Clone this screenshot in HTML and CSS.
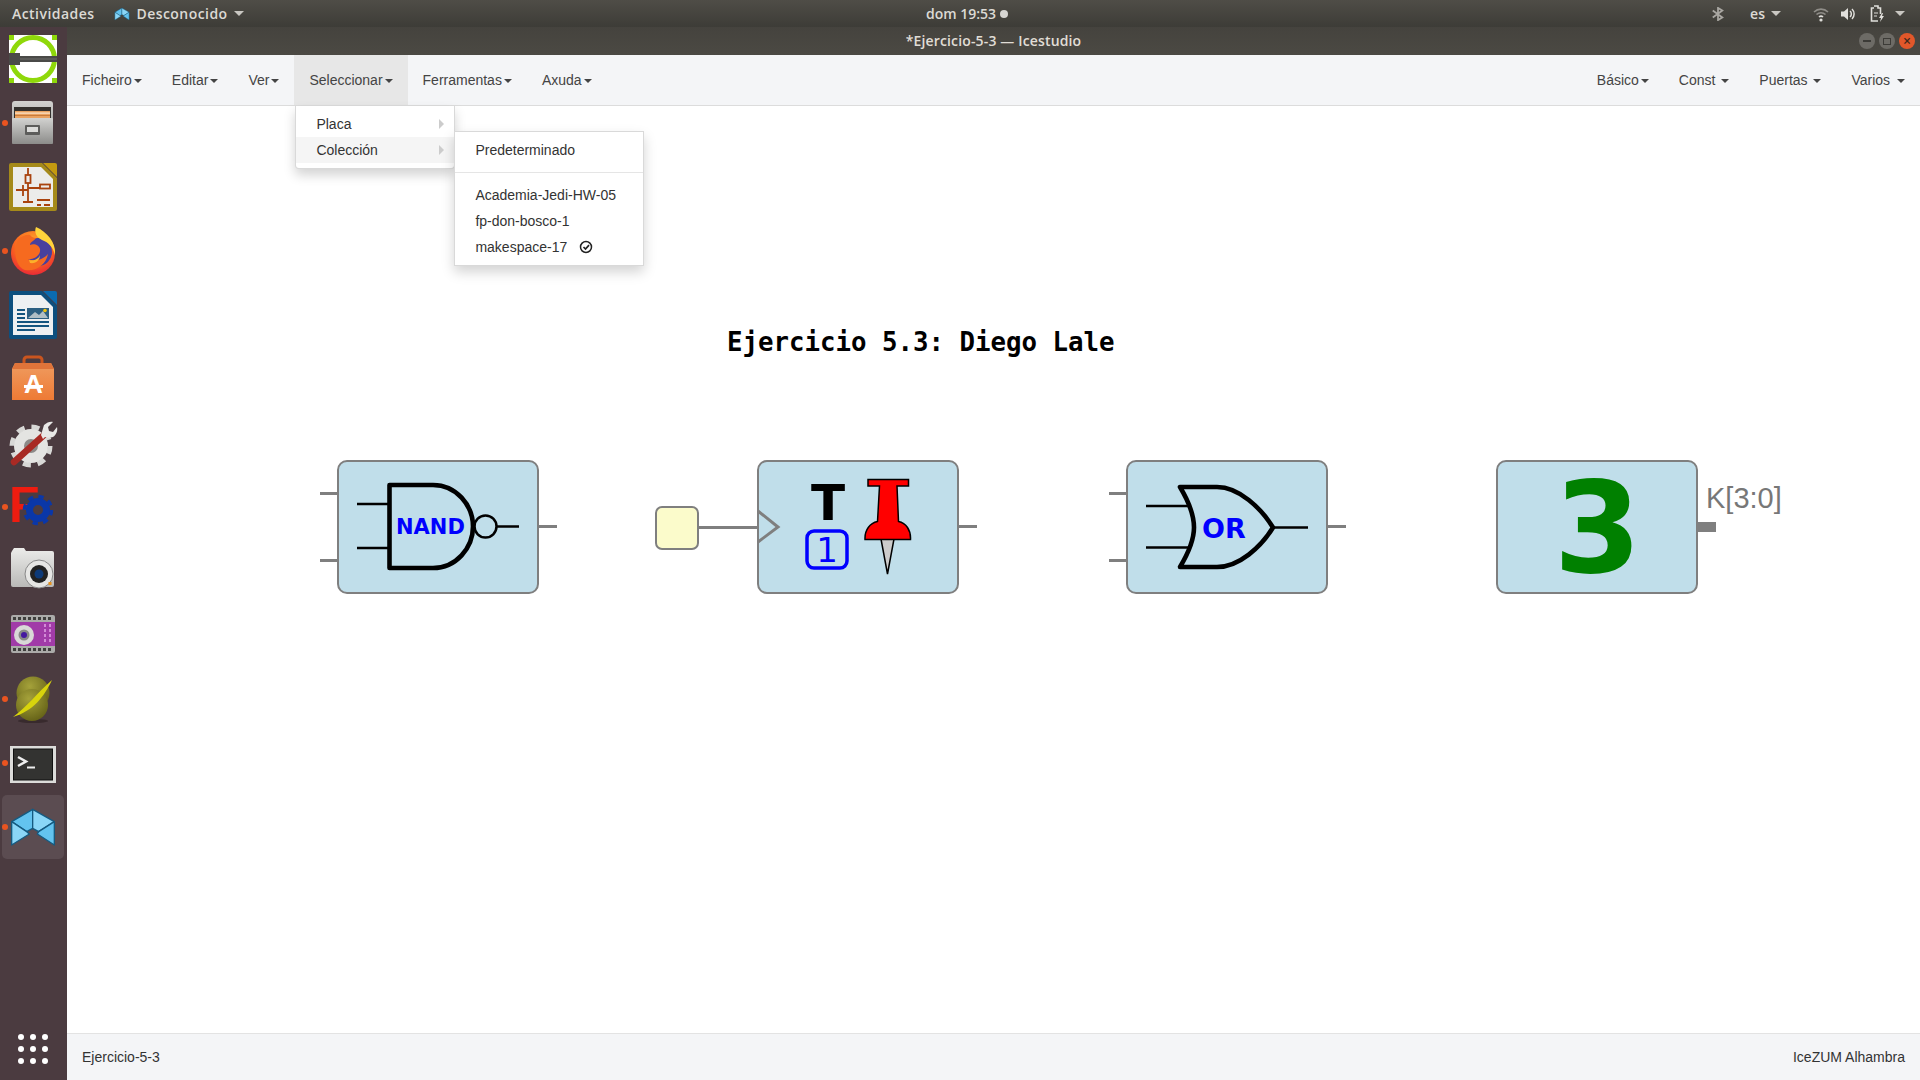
FILE: index.html
```html
<!DOCTYPE html>
<html lang="es">
<head>
  <meta charset="UTF-8" />
  <title>Icestudio</title>
  <link rel="stylesheet" href="styles.css">
</head>
<body>
  <svg class="defs">
    <defs>
      <linearGradient id="greyV" x1="0" y1="0" x2="0" y2="1"><stop offset="0" stop-color="#d2d2d0"/><stop offset="1" stop-color="#8c8c8a"/></linearGradient>
      <linearGradient id="lightV" x1="0" y1="0" x2="0" y2="1"><stop offset="0" stop-color="#ececea"/><stop offset="1" stop-color="#b9b9b7"/></linearGradient>
      <linearGradient id="orangeV" x1="0" y1="0" x2="0" y2="1"><stop offset="0" stop-color="#ef9c60"/><stop offset="1" stop-color="#ee7a35"/></linearGradient>
      <radialGradient id="foxBody" cx="0.5" cy="0.3" r="0.8"><stop offset="0" stop-color="#ffb52e"/><stop offset="0.55" stop-color="#f9621f"/><stop offset="1" stop-color="#e3163f"/></radialGradient>
      <radialGradient id="ball" cx="0.4" cy="0.3" r="0.8"><stop offset="0" stop-color="#a5a23a"/><stop offset="1" stop-color="#5f5c14"/></radialGradient>
    </defs>
  </svg>

  <header class="topbar">
    <div class="top-left">
      <span class="top-item">Actividades</span>
      <span class="top-item app-name">
        <svg class="app-mini" viewBox="27 729 144 144"><use href="#ice-mark"/></svg>
        <span>Desconocido</span><i class="top-caret"></i>
      </span>
    </div>
    <div class="top-clock">dom 19:53 <i class="clock-dot"></i></div>
    <div class="top-right">
      <svg class="tray-bt" viewBox="0 0 16 16"><path d="M2 4l11 8-5 3V1l5 3L2 12" fill="none" stroke="#a9a7a2" stroke-width="2"/></svg>
      <span class="tray-lang">es</span><i class="top-caret lang-caret"></i>
      <svg class="tray-wifi" viewBox="0 0 16 16"><path d="M1 6a10 10 0 0 1 14 0M3.500 8.500a6.500 6.500 0 0 1 9 0" fill="none" stroke="#8f8d88" stroke-width="1.600"/><path d="M6 11a3 3 0 0 1 4 0" fill="none" stroke="#e0dfdb" stroke-width="1.600"/><circle cx="8" cy="14" r="1.600" fill="#e0dfdb"/></svg>
      <svg class="tray-vol" viewBox="0 0 16 16"><path d="M1 5.500h3L8 2v12l-4-3.500H1z" fill="#e0dfdb"/><path d="M10 5a4 4 0 0 1 0 6M12 3a7 7 0 0 1 0 10" fill="none" stroke="#e0dfdb" stroke-width="1.500"/></svg>
      <svg class="tray-bat" viewBox="0 0 16 18"><path d="M5 1h4v2h2.500v6M9 16H2.500V3H5" fill="none" stroke="#e0dfdb" stroke-width="1.600"/><path d="M5 8h4M5 11h3" stroke="#e0dfdb"/><path d="M13 8l-3 5h2l-1 4 4-6h-2l1-3z" fill="#e0dfdb"/></svg>
      <i class="top-caret tray-caret"></i>
    </div>
  </header>

  <div class="desktop">
    <nav class="dock">
      <div class="dock-item">
        <svg class="dock-icon" viewBox="0 0 48 48"><rect width="48" height="48" fill="#fff"/><path d="M0 0h5v5H0zM43 0h5v5h-5zM0 43h5v5H0zM43 43h5v5h-5z" fill="#8fd80a"/><circle cx="24" cy="24" r="21.500" fill="#fff" stroke="#8fd80a" stroke-width="5"/><rect x="0" y="18" width="11" height="12" fill="#4a4a48"/><rect x="11" y="21" width="37" height="6" fill="#4a4a48"/><rect x="11" y="23.500" width="37" height="1" fill="#6c6c6a"/></svg>
      </div>
      <div class="dock-item running">
        <svg class="dock-icon" viewBox="0 0 48 48"><rect x="3" y="2" width="41" height="43" rx="3" fill="url(#greyV)"/><rect x="5" y="8" width="37" height="11" fill="#34312e"/><rect x="6" y="12" width="35" height="7" fill="#e9a261"/><rect x="6" y="13.500" width="35" height="1.200" fill="#fbe7d0"/><rect x="6" y="16" width="35" height="1" fill="#c87a3a"/><rect x="3" y="19" width="41" height="26" rx="1" fill="url(#greyV)"/><rect x="16" y="26" width="15" height="10" rx="1" fill="#5d5d5b"/><rect x="18" y="28" width="11" height="5" fill="#dcdcda"/></svg>
      </div>
      <div class="dock-item">
        <svg class="dock-icon" viewBox="0 0 48 48"><path d="M2 0h31l15 15v31a2 2 0 0 1-2 2H2a2 2 0 0 1-2-2V2a2 2 0 0 1 2-2z" fill="#a58a1a"/><path d="M34 0h12a2 2 0 0 1 2 2v12z" fill="#c49a10"/><path d="M4 4h28l12 12v28H4z" fill="#ececea"/><g fill="none" stroke="#a9430e" stroke-width="1.800"><path d="M19 5v28M19 25h22M7 27h12M14 22v11M19 33v6M14 39h10M28 37h13M28 42h4M35 42h6"/><rect x="16.500" y="12" width="5" height="8" fill="#ececea"/><rect x="31" y="21.500" width="10" height="4" fill="#ececea"/></g></svg>
      </div>
      <div class="dock-item running">
        <svg class="dock-icon" viewBox="0 0 48 48"><circle cx="24" cy="26" r="22" fill="url(#foxBody)"/><circle cx="29" cy="25" r="14" fill="#47409e"/><path d="M27 0c11 5 20 15 19 28-2-8-7-13-13-15-6-3-8-8-6-13z" fill="#ffd43b"/><path d="M9 12c4-3 9-5 12-4 1 2 4 3 6 3-2 3-6 4-6 7 4-2 9 0 10 4 1 6-6 11-12 10 6 3 15 1 20-5-2 11-13 18-23 16C8 41 3 26 9 12z" fill="#f66a1f"/><path d="M20 33c5 1 10-1 11-5 0 5-4 9-10 8z" fill="#fcb12a"/></svg>
      </div>
      <div class="dock-item">
        <svg class="dock-icon" viewBox="0 0 48 48"><path d="M2 0h31l15 15v31a2 2 0 0 1-2 2H2a2 2 0 0 1-2-2V2a2 2 0 0 1 2-2z" fill="#0d4f7e"/><path d="M34 0h12a2 2 0 0 1 2 2v12z" fill="#0a6bb0"/><path d="M4 4h28l12 12v28H4z" fill="#eef0f2"/><g fill="#15557f"><rect x="8" y="18" width="8" height="2"/><rect x="8" y="22" width="8" height="2"/><rect x="8" y="26" width="8" height="2"/><rect x="8" y="30" width="32" height="2"/><rect x="8" y="34" width="32" height="2"/><rect x="8" y="38" width="18" height="2"/></g><rect x="18" y="17" width="22" height="11" fill="#2c5f82"/><path d="M19 27l7-6 4 3 4-4 5 7z" fill="#b0bec5"/><circle cx="36" cy="19.500" r="1.800" fill="#f1c40f"/></svg>
      </div>
      <div class="dock-item">
        <svg class="dock-icon" viewBox="0 0 48 48"><path d="M15 14V5a3 3 0 0 1 3-3h12a3 3 0 0 1 3 3v9" fill="none" stroke="#c9551f" stroke-width="3"/><path d="M6 8h36l3 6v31H3V14z" fill="url(#orangeV)"/><path d="M6 8h36l3 6H3z" fill="#e0743a"/><text class="store-a" x="24.500" y="38">A</text><rect x="15" y="30" width="19" height="3" fill="#fff"/></svg>
      </div>
      <div class="dock-item">
        <svg class="dock-icon" viewBox="0 0 48 48"><circle cx="22" cy="27" r="19" fill="none" stroke="#d8d8d6" stroke-width="5" stroke-dasharray="8 6.900"/><circle cx="22" cy="27" r="12" fill="#8c8a88" stroke="#e4e4e2" stroke-width="10"/><path d="M5 43L35 16" stroke="#a82a24" stroke-width="6.500" stroke-linecap="round"/><path d="M32 16l3-10c3-3 7-4 9-3l-5 5 1 4 4 1 4-5c1 4-1 8-4 10-3 1-6 1-8 0l-2 2z" fill="#e8e8e6"/></svg>
      </div>
      <div class="dock-item running">
        <svg class="dock-icon" viewBox="0 0 48 48"><text class="fc-f" x="0" y="39">F</text><circle cx="29" cy="27" r="8.500" fill="#4b3b40" stroke="#0a37a8" stroke-width="7"/><circle cx="29" cy="27" r="13.500" fill="none" stroke="#0a37a8" stroke-width="3.500" stroke-dasharray="5.300 5.300"/></svg>
      </div>
      <div class="dock-item">
        <svg class="dock-icon" viewBox="0 0 48 48"><path d="M3 4l2-3h10l2 3h26a2 2 0 0 1 2 2v32a2 2 0 0 1-2 2H4a2 2 0 0 1-2-2V6z" fill="url(#lightV)"/><circle cx="30" cy="27" r="14" fill="#e6e6e4" stroke="#888"/><circle cx="30" cy="27" r="9" fill="#222"/><circle cx="30" cy="27" r="4.500" fill="#0d3a78"/><rect x="39.500" y="35" width="3" height="3" fill="#e8921e"/></svg>
      </div>
      <div class="dock-item">
        <svg class="dock-icon" viewBox="0 0 48 48"><rect x="2" y="4" width="44" height="38" rx="2" fill="#ababa9"/><rect x="2" y="11" width="44" height="24" fill="#a13ba8"/><g fill="none" stroke="#3f3f3d" stroke-width="3" stroke-dasharray="3 2"><path d="M4 7.500h40M4 38.500h40"/></g><g fill="none" stroke="#d28ad6" stroke-width="2" stroke-dasharray="3 2"><path d="M36 13v20M41 13v20"/></g><circle cx="15" cy="24" r="10" fill="#d9d9d7"/><circle cx="15" cy="24" r="5.500" fill="#8a8a88"/><circle cx="15" cy="24" r="3" fill="#4518a0"/></svg>
      </div>
      <div class="dock-item running">
        <svg class="dock-icon" viewBox="0 0 48 48"><ellipse cx="24" cy="46" rx="15" ry="2" fill="#2c2022" opacity="0.6"/><circle cx="24" cy="18" r="16.500" fill="url(#ball)"/><circle cx="23" cy="30" r="16" fill="url(#ball)"/><path d="M4 42C18 32 28 18 43 5 35 22 24 36 4 42z" fill="#d8d40c"/></svg>
      </div>
      <div class="dock-item running">
        <svg class="dock-icon" viewBox="0 0 48 48"><rect x="1" y="7" width="46" height="37" fill="#dcdcda"/><rect x="4.500" y="10" width="39" height="31" fill="#333331" stroke="#111"/><path d="M9 18l8 4.500-8 4.500" fill="none" stroke="#eee" stroke-width="2.500"/><rect x="18" y="27.500" width="8" height="2" fill="#eee"/></svg>
      </div>
      <div class="dock-item running active">
        <svg class="dock-icon" viewBox="27 729 144 144">
          <g id="ice-mark" stroke="#155a80" stroke-width="4" stroke-linejoin="round">
            <polygon points="98,748 98,805 80,815 35,785" fill="#63c3ef"/>
            <polygon points="98,748 98,805 116,815 163,785" fill="#8ad6f7"/>
            <polygon points="35,785 35,855 88,822 80,815" fill="#8ad6f7"/>
            <polygon points="163,785 163,855 112,822 116,815" fill="#63c3ef"/>
          </g>
        </svg>
      </div>
      <div class="dock-apps">
        <i></i><i></i><i></i><i></i><i></i><i></i><i></i><i></i><i></i>
      </div>
    </nav>

    <div class="window">
      <div class="titlebar">
        <span class="title-text">*Ejercicio-5-3 — Icestudio</span>
        <div class="win-buttons">
          <span class="win-btn"><i class="win-min"></i></span>
          <span class="win-btn"><i class="win-max"></i></span>
          <span class="win-btn win-close">×</span>
        </div>
      </div>

      <div class="navbar">
        <ul class="nav">
          <li>Ficheiro<i class="caret"></i></li>
          <li>Editar<i class="caret"></i></li>
          <li>Ver<i class="caret"></i></li>
          <li class="open">Seleccionar<i class="caret"></i>
            <ul class="dropdown">
              <li class="has-sub">Placa</li>
              <li class="has-sub hover">Colección
                <ul class="dropdown submenu">
                  <li>Predeterminado</li>
                  <li class="divider"></li>
                  <li>Academia-Jedi-HW-05</li>
                  <li>fp-don-bosco-1</li>
                  <li>makespace-17
                    <svg class="check" viewBox="0 0 14 14"><circle cx="7" cy="7" r="5.500" fill="none" stroke="#222" stroke-width="1.500"/><path d="M4.500 7l2 2 3.500-3.800" fill="none" stroke="#222" stroke-width="1.700"/></svg>
                  </li>
                </ul>
              </li>
            </ul>
          </li>
          <li>Ferramentas<i class="caret"></i></li>
          <li>Axuda<i class="caret"></i></li>
        </ul>
        <ul class="nav nav-right">
          <li>Básico<i class="caret"></i></li>
          <li>Const <i class="caret"></i></li>
          <li>Puertas <i class="caret"></i></li>
          <li class="nav-last">Varios <i class="caret"></i></li>
        </ul>
      </div>

      <main class="canvas">
        <h1 class="sheet-title">Ejercicio 5.3: Diego Lale</h1>

        <div class="block block-nand">
          <i class="port port-a"></i><i class="port port-b"></i><i class="port port-out"></i>
          <svg class="symbol" viewBox="0 0 201 134">
            <path class="gate" d="M51.500 25H95C118 25 135 45 135 66.500S118 108 95 108H51.500Z"/>
            <path class="lead" d="M19 44H51M19 88H51M159 66.500H181"/>
            <circle class="lead" cx="147.500" cy="66.500" r="11"/>
            <text class="gate-name nand-name" x="58" y="74">NAND</text>
          </svg>
        </div>

        <div class="input-box"></div>
        <div class="wire"></div>

        <div class="block block-ff">
          <i class="port port-out"></i>
          <svg class="symbol" viewBox="0 0 201 134">
            <path class="clock" d="M0 51L20 67 0 82"/>
            <text class="ff-t" x="70" y="60">T</text>
            <rect class="ff-box" x="49" y="71" width="40" height="37" rx="7"/>
            <text class="ff-one" x="69" y="102">1</text>
            <path class="pin-needle" d="M123 79L129.500 114 136 79Z"/>
            <path class="pin-head" d="M110 19.500H150.500V26H139L140.500 61.500C148 63 153 70 152.500 79.500H107C106.500 70 112 63 119.500 61.500L121.500 26H110Z"/>
          </svg>
        </div>

        <div class="block block-or">
          <i class="port port-a"></i><i class="port port-b"></i><i class="port port-out"></i>
          <svg class="symbol" viewBox="0 0 201 134">
            <path class="gate" d="M53 27H90C112 27 134 48 146 67.500 134 87 112 107 90 107H53C62 92 67 80 67 67.500 67 55 62 42 53 27Z"/>
            <path class="lead" d="M19 46H62M19 87.500H62M146 67.500H181"/>
            <text class="gate-name or-name" x="75" y="77.500">OR</text>
          </svg>
        </div>

        <div class="block block-const">
          <i class="port port-bus"></i>
          <svg class="symbol" viewBox="0 0 201 134">
            <text class="const-num" x="100.500" y="112">3</text>
          </svg>
        </div>
        <span class="bus-label">K[3:0]</span>
      </main>

      <footer class="statusbar">
        <span>Ejercicio-5-3</span>
        <span>IceZUM Alhambra</span>
      </footer>
    </div>
  </div>
</body>
</html>
```

FILE: styles.css
```css
* {
  box-sizing: border-box;
}
html, body {
  height: 100%;
}
body {
  margin: 0;
  display: flex;
  flex-direction: column;
  overflow: hidden;
  font-family: "Liberation Sans", Arial, sans-serif;
  font-size: 14px;
  color: #333;
  background-color: #fff;
}
.defs {
  position: absolute;
  width: 0;
  height: 0;
}

/* system top bar */
.topbar {
  height: 27px;
  flex: none;
  display: grid;
  grid-template-columns: 1fr auto 1fr;
  align-items: center;
  padding: 0 0 0 12px;
  background: linear-gradient(#4f4d47, #3d3c37);
  color: #dcdad5;
  font-family: "Open Sans", sans-serif;
  font-weight: 600;
  font-size: 14px;
}
.top-left, .top-right {
  display: flex;
  align-items: center;
}
.top-right {
  justify-content: flex-end;
}
.top-item {
  display: flex;
  align-items: center;
  letter-spacing: 0.45px;
}
.app-name {
  margin-left: 20px;
}
.app-mini {
  width: 16px;
  height: 16px;
  margin-right: 6px;
}
.top-caret {
  display: inline-block;
  margin-left: 6px;
  border-top: 5px solid #c9c7c2;
  border-left: 5px solid transparent;
  border-right: 5px solid transparent;
}
.top-clock {
  display: flex;
  align-items: center;
  gap: 4px;
  margin-left: 2px;
}
.clock-dot {
  width: 8px;
  height: 8px;
  border-radius: 50%;
  background-color: #d6d5d1;
}
.tray-bt {
  width: 14px;
  height: 14px;
}
.tray-lang {
  margin-left: 25px;
}
.lang-caret {
  margin-left: 6px;
}
.tray-wifi {
  width: 16px;
  height: 16px;
  margin-left: 32px;
}
.tray-vol {
  width: 16px;
  height: 16px;
  margin-left: 11px;
}
.tray-bat {
  width: 16px;
  height: 18px;
  margin-left: 13px;
}
.tray-caret {
  margin-left: 10px;
  margin-right: 15px;
}

/* dock */
.desktop {
  flex: 1;
  display: flex;
  min-height: 0;
}
.dock {
  width: 67px;
  flex: none;
  display: flex;
  flex-direction: column;
  padding-right: 1px;
  background-color: #4b3b40;
}
.dock-item {
  height: 64px;
  flex: none;
  display: flex;
  align-items: center;
  justify-content: center;
  position: relative;
}
.dock-icon {
  width: 48px;
  height: 48px;
  overflow: visible;
}
.dock-item.running::before {
  content: "";
  position: absolute;
  left: 2px;
  top: 29px;
  width: 6px;
  height: 6px;
  border-radius: 50%;
  background-color: #e95420;
}
.dock-item.active {
  background-color: #5b4c51;
  border-radius: 5px;
  margin: 0 2px;
}
.dock-item.active::before {
  left: 0;
}
.dock-apps {
  margin: auto auto 16px;
  display: grid;
  grid-template-columns: repeat(3, 6px);
  gap: 6px;
}
.dock-apps i {
  width: 6px;
  height: 6px;
  border-radius: 50%;
  background-color: #fff;
}

/* window */
.window {
  flex: 1;
  min-width: 0;
  display: flex;
  flex-direction: column;
}
.titlebar {
  height: 28px;
  flex: none;
  display: flex;
  align-items: center;
  justify-content: center;
  position: relative;
  padding-bottom: 2px;
  background: linear-gradient(#45433e, #4b4943);
  color: #e0ddd6;
  font-family: "Open Sans", sans-serif;
  font-weight: 600;
  font-size: 14px;
  letter-spacing: 0.15px;
}
.win-buttons {
  position: absolute;
  right: 5px;
  top: 6px;
  display: flex;
  gap: 4px;
}
.win-btn {
  width: 16px;
  height: 16px;
  border-radius: 50%;
  background-color: #6d6b66;
  display: flex;
  align-items: center;
  justify-content: center;
}
.win-min {
  width: 8px;
  height: 2px;
  background-color: #3c3b37;
}
.win-max {
  width: 8px;
  height: 7px;
  border: 1px solid #3c3b37;
}
.win-close {
  background-color: #e2572a;
  color: #40281c;
  font-size: 14px;
  line-height: 1;
}

/* navbar */
.navbar {
  height: 51px;
  flex: none;
  display: flex;
  justify-content: space-between;
  position: relative;
  z-index: 10;
  background-color: #f4f5f7;
  border-bottom: 1px solid #dcdcdc;
}
.nav, .dropdown {
  list-style: none;
  margin: 0;
  padding: 0;
}
.nav {
  display: flex;
}
.nav > li {
  position: relative;
  padding: 15px;
  line-height: 20px;
  height: 50px;
  color: #444;
}
.nav > li.open {
  background-color: #e7e7e7;
}
.caret {
  display: inline-block;
  width: 0;
  height: 0;
  margin-left: 2px;
  vertical-align: middle;
  border-top: 4px solid #444;
  border-left: 4px solid transparent;
  border-right: 4px solid transparent;
}
.nav-last .caret {
  margin-left: 3px;
}
.dropdown {
  position: absolute;
  left: 1px;
  top: 51px;
  width: 160px;
  padding: 5px 0;
  background-color: #fff;
  border: 1px solid rgba(0, 0, 0, 0.15);
  border-top: 0;
  border-radius: 0 0 4px 4px;
  box-shadow: 0 6px 12px rgba(0, 0, 0, 0.175);
  color: #333;
}
.dropdown > li {
  position: relative;
  height: 26px;
  padding: 3px 20px;
  line-height: 20px;
  white-space: nowrap;
}
.has-sub::after {
  content: "";
  position: absolute;
  right: 10px;
  top: 8px;
  border-left: 5px solid #ccc;
  border-top: 5px solid transparent;
  border-bottom: 5px solid transparent;
}
.dropdown > li.hover {
  background-color: #f5f5f5;
}
.submenu {
  left: 100%;
  top: -6px;
  width: 190px;
  border-top: 1px solid rgba(0, 0, 0, 0.15);
  border-radius: 0;
}
.dropdown > li.divider {
  height: 1px;
  padding: 0;
  margin: 9px 0;
  background-color: #e5e5e5;
}
.check {
  width: 14px;
  height: 14px;
  margin-left: 8px;
  vertical-align: -2px;
}

/* canvas */
.canvas {
  flex: 1;
  position: relative;
  background-color: #fff;
}
.sheet-title {
  position: absolute;
  left: 660px;
  top: 221px;
  margin: 0;
  font-family: "DejaVu Sans Mono", monospace;
  font-weight: bold;
  font-size: 25.750px;
  line-height: 30px;
  color: #000;
}
.block {
  position: absolute;
  top: 354px;
  width: 202px;
  height: 134px;
  background-color: #c0deea;
  border: 2px solid #7f7f7f;
  border-radius: 10px;
}
.block-nand {
  left: 270px;
}
.block-ff {
  left: 690px;
}
.block-or {
  left: 1059px;
}
.block-const {
  left: 1429px;
}
.symbol {
  position: absolute;
  left: -1px;
  top: -2px;
  width: 201px;
  height: 134px;
  overflow: visible;
}
.port {
  position: absolute;
  width: 18px;
  height: 3px;
  background-color: #7f7f7f;
}
.port-a {
  left: -19px;
  top: 30px;
}
.port-b {
  left: -19px;
  top: 97px;
}
.port-out {
  right: -20px;
  top: 63px;
}
.port-bus {
  position: absolute;
  right: -20px;
  top: 60px;
  width: 18px;
  height: 10px;
  background-color: #7f7f7f;
}
.gate {
  fill: none;
  stroke: #000;
  stroke-width: 4.600;
  stroke-linejoin: round;
}
.lead {
  fill: none;
  stroke: #000;
  stroke-width: 2.500;
}
.gate-name {
  fill: #0000ff;
  font-family: "DejaVu Sans", sans-serif;
  font-weight: bold;
}
.nand-name {
  font-size: 21px;
}
.or-name {
  font-size: 27px;
}
.clock {
  fill: none;
  stroke: #7f7f7f;
  stroke-width: 3;
}
.ff-t {
  font-family: "DejaVu Sans", sans-serif;
  font-weight: bold;
  font-size: 50px;
  text-anchor: middle;
  fill: #000;
}
.ff-box {
  fill: none;
  stroke: #0000ff;
  stroke-width: 3.500;
}
.ff-one {
  font-family: "DejaVu Sans", sans-serif;
  font-size: 34px;
  text-anchor: middle;
  fill: #0000ff;
}
.pin-head {
  fill: #ff0000;
  stroke: #000;
  stroke-width: 1.500;
}
.pin-needle {
  fill: #cccccc;
  stroke: #000;
  stroke-width: 1.500;
}
.const-num {
  font-family: "DejaVu Sans", sans-serif;
  font-weight: bold;
  font-size: 126px;
  text-anchor: middle;
  fill: #008000;
}
.input-box {
  position: absolute;
  left: 588px;
  top: 399.500px;
  width: 44px;
  height: 44px;
  background-color: #fbfbcb;
  border: 2px solid #7f7f7f;
  border-radius: 7px;
}
.wire {
  position: absolute;
  left: 632px;
  top: 419.500px;
  width: 58px;
  height: 3px;
  background-color: #7f7f7f;
}
.bus-label {
  position: absolute;
  left: 1639px;
  top: 376px;
  font-size: 29px;
  line-height: 32px;
  color: #777;
}

/* footer */
.statusbar {
  height: 47px;
  flex: none;
  display: flex;
  align-items: center;
  justify-content: space-between;
  padding: 0 15px;
  background-color: #f4f5f7;
  border-top: 1px solid #e3e3e3;
}

/* dock icon glyphs */
.store-a {
  font-family: "Liberation Sans", sans-serif;
  font-weight: bold;
  font-size: 26px;
  text-anchor: middle;
  fill: #fff;
}
.fc-f {
  font-family: "Liberation Sans", sans-serif;
  font-weight: bold;
  font-size: 50px;
  fill: #ee1c10;
}
```
